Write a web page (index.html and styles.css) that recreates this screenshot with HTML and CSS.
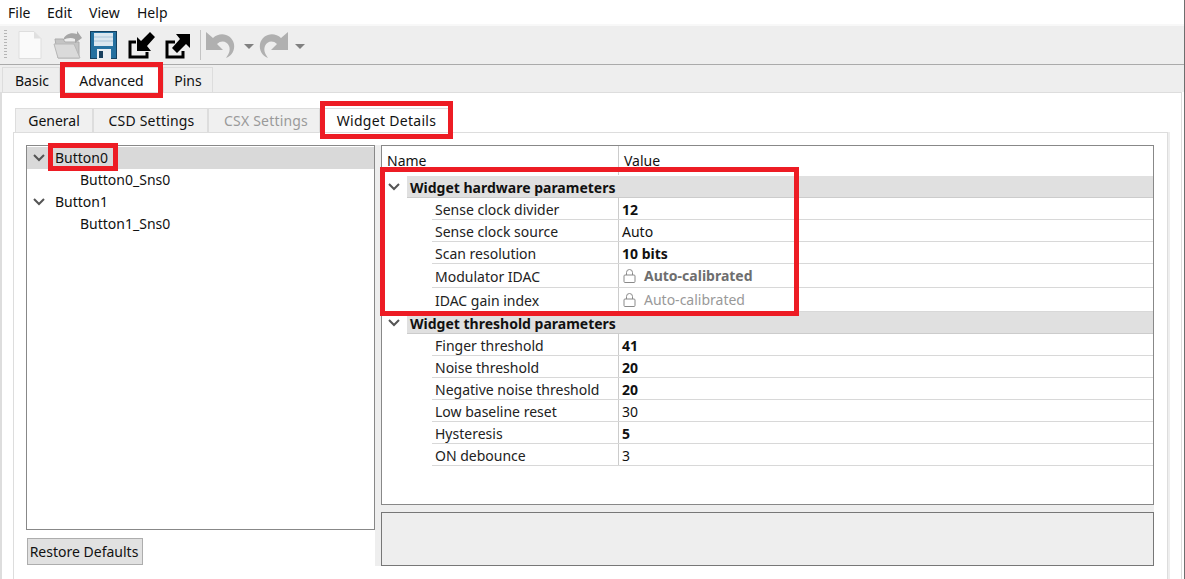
FILE: index.html
```html
<!DOCTYPE html>
<html>
<head>
  <title>CapSense Configurator</title>
  <link rel="stylesheet" href="styles.css">
</head>
<body>
  <div class="menubar">
    <span class="menu-item">File</span>
    <span class="menu-item">Edit</span>
    <span class="menu-item">View</span>
    <span class="menu-item">Help</span>
  </div>

  <div class="toolbar">
    <span class="grip"></span>
    <svg class="tool tool-new" width="24" height="28" viewBox="0 0 24 28"><path d="M1 .5h15l7 7v20H1z" fill="#fafafa" stroke="#dedede"/><path d="M16 .5v7h7z" fill="#e0e0e0"/></svg>
    <svg class="tool tool-open" width="29" height="28" viewBox="0 0 29 28"><path d="M2 8h8l2 3h14v16H5z" fill="#c4c4c4" stroke="#adadad"/><path d="M1 13h20l6 14H5z" fill="#dadada" stroke="#b8b8b8"/><path d="M10 9c2-6 8-8 14-6V0l5 7-7 5V8c-4-2-8-1-12 1z" fill="#a6a6a6"/></svg>
    <svg class="tool tool-save" width="27" height="28" viewBox="0 0 27 28"><rect width="27" height="28" rx="1" fill="#24709f"/><rect x=".5" y=".5" width="26" height="27" fill="none" stroke="#14405f"/><rect x="4" y="2" width="19" height="13" fill="#dbe7ef"/><path d="M4 6h19M4 10h19" stroke="#a9c4d8"/><rect x="7" y="18" width="14" height="10" fill="#e9eef2"/><rect x="9" y="20" width="4" height="7" fill="#16405f"/></svg>
    <svg class="tool tool-import" width="28" height="28" viewBox="0 0 28 28"><path d="M8 11H2v15h17v-5" fill="none" stroke="#000" stroke-width="3"/><path d="M27 6l-5-5-9 9-4-4v14h14l-4-5z" fill="#000"/></svg>
    <svg class="tool tool-export" width="28" height="28" viewBox="0 0 28 28"><path d="M10 11H2v15h16v-6" fill="none" stroke="#000" stroke-width="3"/><path d="M7 17l5 5 9-9 4 4V3H11l4 5z" fill="#000"/></svg>
    <span class="tool-sep"></span>
    <svg class="tool tool-undo" width="29" height="28" viewBox="0 0 29 28"><path d="M0 1v18h17l-6-6c4-4 10-3 12 2 2 5-1 9-3 12 6-2 9-8 8-14C26 3 14 0 7 7z" fill="#b0b0b0"/></svg>
    <span class="caret"></span>
    <svg class="tool tool-redo" width="29" height="28" viewBox="0 0 29 28"><path d="M29 1v18H12l6-6c-4-4-10-3-12 2-2 5 1 9 3 12-6-2-9-8-8-14C3 3 15 0 22 7z" fill="#b0b0b0"/></svg>
    <span class="caret"></span>
  </div>

  <div class="tabbar">
    <span class="tab tab-basic">Basic</span>
    <span class="tab tab-advanced active">Advanced</span>
    <span class="tab tab-pins">Pins</span>
    <span class="mark mark-advanced"></span>
  </div>

  <div class="page">
    <div class="subtabs">
      <span class="subtab tab-general">General</span>
      <span class="subtab tab-csd">CSD Settings</span>
      <span class="subtab tab-csx disabled">CSX Settings</span>
      <span class="subtab tab-widget active">Widget Details</span>
      <span class="mark mark-widget"></span>
    </div>

    <div class="subpage">
      <div class="left">
        <div class="tree">
          <div class="tree-row selected"><svg class="chev" viewBox="0 0 12 8"><path d="M1 1l5 5 5-5" /></svg><span>Button0</span></div>
          <div class="tree-row child"><span>Button0_Sns0</span></div>
          <div class="tree-row"><svg class="chev" viewBox="0 0 12 8"><path d="M1 1l5 5 5-5" /></svg><span>Button1</span></div>
          <div class="tree-row child"><span>Button1_Sns0</span></div>
          <span class="mark mark-button"></span>
        </div>
        <button class="restore">Restore Defaults</button>
      </div>

      <div class="right">
        <div class="grid">
          <div class="grid-head"><span class="col-name">Name</span><span class="col-value">Value</span></div>

          <div class="group"><svg class="chev" viewBox="0 0 12 8"><path d="M1 1l5 5 5-5" /></svg><div class="group-bar"><span class="group-name">Widget hardware parameters</span></div></div>
          <div class="row"><span class="name">Sense clock divider</span><span class="value bold">12</span></div>
          <div class="row"><span class="name">Sense clock source</span><span class="value">Auto</span></div>
          <div class="row"><span class="name">Scan resolution</span><span class="value bold">10 bits</span></div>
          <div class="row tall"><span class="name">Modulator IDAC</span><span class="value locked bold"><svg class="lock" viewBox="0 0 13 14"><path d="M3.500 6V3.500a3 3 0 0 1 6 0V6" /><rect x="1" y="6" width="11" height="7.500" rx="1" /></svg>Auto-calibrated</span></div>
          <div class="row tall"><span class="name">IDAC gain index</span><span class="value locked light"><svg class="lock" viewBox="0 0 13 14"><path d="M3.500 6V3.500a3 3 0 0 1 6 0V6" /><rect x="1" y="6" width="11" height="7.500" rx="1" /></svg>Auto-calibrated</span></div>

          <div class="group"><svg class="chev" viewBox="0 0 12 8"><path d="M1 1l5 5 5-5" /></svg><div class="group-bar"><span class="group-name">Widget threshold parameters</span></div></div>
          <div class="row"><span class="name">Finger threshold</span><span class="value bold">41</span></div>
          <div class="row"><span class="name">Noise threshold</span><span class="value bold">20</span></div>
          <div class="row"><span class="name">Negative noise threshold</span><span class="value bold">20</span></div>
          <div class="row"><span class="name">Low baseline reset</span><span class="value">30</span></div>
          <div class="row"><span class="name">Hysteresis</span><span class="value bold">5</span></div>
          <div class="row"><span class="name">ON debounce</span><span class="value">3</span></div>

          <span class="mark mark-grid"></span>
        </div>
        <div class="help-box"></div>
      </div>
    </div>
  </div>
</body>
</html>
```

FILE: styles.css
```css
html, body {
  margin: 0;
  height: 579px;
  overflow: hidden;
}
body {
  display: flex;
  flex-direction: column;
  box-sizing: border-box;
  border-right: 1px solid #6e6e6e;
  background: #fff;
  color: #111;
  font-family: "Noto Sans", sans-serif;
  font-size: 14px;
  line-height: 20px;
}

/* red marks lying over the screenshot */
.mark {
  position: absolute;
  border: 5px solid #ed1c24;
  box-sizing: border-box;
}
.mark-advanced { left: 60px; top: -3px; width: 103px; height: 36px; }
.mark-widget { left: 307px; top: -7px; width: 133px; height: 38px; }
.mark-button { left: 21px; top: -3px; width: 70px; height: 28px; }
.mark-grid { left: -2px; top: 21px; width: 419px; height: 149px; }

.menubar {
  height: 26px;
  display: flex;
  box-sizing: border-box;
  padding: 3px 0 0 8px;
  border-bottom: 2px solid #f8f8f8;
}
.menu-item:nth-child(1) { width: 39px; }
.menu-item:nth-child(2) { width: 42px; }
.menu-item:nth-child(3) { width: 48px; }

.toolbar {
  height: 39px;
  box-sizing: border-box;
  display: flex;
  align-items: center;
  background: #eee;
  border-bottom: 1px solid #aaa;
  padding: 0 0 1px 4px;
}
.grip {
  width: 3px;
  height: 30px;
  margin-right: 11px;
  background: repeating-linear-gradient(#b5b5b5 0 1px, transparent 1px 3px);
}
.tool { flex: none; }
.tool-open { margin-left: 11px; }
.tool-save { margin-left: 8px; }
.tool-import { margin-left: 11px; }
.tool-export { margin-left: 9px; }
.tool-sep {
  width: 1px;
  height: 30px;
  background: #c4c4c4;
  margin: 0 5px 0 7px;
}
.caret {
  width: 0;
  height: 0;
  border-left: 5px solid transparent;
  border-right: 5px solid transparent;
  border-top: 5px solid #808080;
  margin: 3px 5px 0 9px;
}
.caret:last-child { margin-left: 7px; }

.tabbar {
  position: relative;
  height: 27px;
  box-sizing: border-box;
  padding: 2px 0 0 2px;
  display: flex;
  background: #eee;
}
.tab, .subtab {
  box-sizing: border-box;
  border: 1px solid #ddd;
  border-bottom: none;
  text-align: center;
  white-space: nowrap;
}
.tab { height: 25px; line-height: 26px; }
.tab-basic { width: 58px; padding-left: 2px; }
.tab-advanced { width: 103px; }
.tab-pins { width: 50px; }
.tab.active, .subtab.active {
  background: #fff;
}

.page {
  flex: 1;
  min-height: 0;
  width: 1182px;
  box-sizing: border-box;
  background: #fff;
  border: 1px solid #ddd;
  border-bottom: none;
  border-left-width: 2px;
  padding: 15px 13px 0 11px;
  display: flex;
  flex-direction: column;
}

.subtabs {
  position: relative;
  height: 24px;
  display: flex;
  padding-left: 2px;
}
.subtab {
  height: 24px;
  line-height: 23px;
  background: #f0f0f0;
}
.tab-general { width: 78px; }
.tab-csd { width: 115px; padding-left: 2px; letter-spacing: .2px; }
.tab-csx { width: 112px; padding-left: 4px; letter-spacing: .2px; }
.tab-widget { width: 133px; letter-spacing: .3px; }
.subtab.disabled { color: #9a9a9a; }

.subpage {
  flex: 1;
  min-height: 0;
  display: flex;
  align-items: flex-start;
  border: 1px solid #ddd;
  border-bottom: none;
  box-shadow: 2px 0 0 #eee;
  padding: 12px 13px 0 12px;
}

.left {
  width: 349px;
  flex: none;
}
.tree {
  position: relative;
  height: 385px;
  box-sizing: border-box;
  border: 1px solid #888;
  padding-top: 1px;
}
.tree-row {
  height: 22px;
  line-height: 22px;
  padding-left: 28px;
  position: relative;
}
.tree-row .chev { left: 6px; top: 7px; }
.tree-row.selected { background: #d9d9d9; }
.tree-row.child { padding-left: 53px; }

.chev {
  position: absolute;
  width: 12px;
  height: 8px;
  fill: none;
  stroke: #555;
  stroke-width: 2;
}

.restore {
  display: block;
  margin: 8px 0 0 1px;
  width: 116px;
  height: 27px;
  padding: 0 2px 0 0;
  background: #e1e1e1;
  border: 1px solid #adadad;
  color: #111;
  font: inherit;
}

.right {
  flex: 1;
  height: 421px;
  display: flex;
  flex-direction: column;
  gap: 7px;
  background: #eee;
  padding-left: 6px;
}
.grid {
  position: relative;
  height: 360px;
  box-sizing: border-box;
  border: 1px solid #888;
  background: #fff;
}
.grid-head {
  height: 30px;
  display: flex;
  padding-top: 5px;
  box-sizing: border-box;
  border-bottom: 1px solid #fff;
}
.col-name { width: 231px; padding-left: 5px; }
.col-value { border-left: 1px solid #ccc; padding-left: 5px; margin-top: -5px; padding-top: 5px; }

.group {
  position: relative;
  height: 22px;
  padding-left: 25px;
}
.group .chev { left: 6px; top: 7px; }
.group-bar {
  height: 22px;
  box-sizing: border-box;
  line-height: 23px;
  background: #e0e0e0;
  border-bottom: 1px solid #ccc;
  padding-left: 3px;
}
.group-name {
  font-weight: bold;
  white-space: nowrap;
}

.row {
  display: flex;
  height: 22px;
  line-height: 23px;
  box-sizing: border-box;
  margin-left: 50px;
  border-bottom: 1px solid #d8d8d8;
}
.row.tall { height: 24px; line-height: 25px; }
.name {
  width: 186px;
  padding-left: 3px;
  box-sizing: border-box;
  color: #222;
  white-space: nowrap;
}
.value {
  border-left: 1px solid #ccc;
  padding-left: 3px;
}
.bold { font-weight: bold; }
.locked { display: flex; align-items: center; color: #6e6e6e; padding-left: 4px; }
.locked.light { color: #999; }
.lock {
  width: 13px;
  height: 14px;
  margin-right: 8px;
  fill: none;
  stroke: #8a8a8a;
}

.help-box {
  height: 54px;
  box-sizing: border-box;
  border: 1px solid #777;
  background: #eee;
}
```
